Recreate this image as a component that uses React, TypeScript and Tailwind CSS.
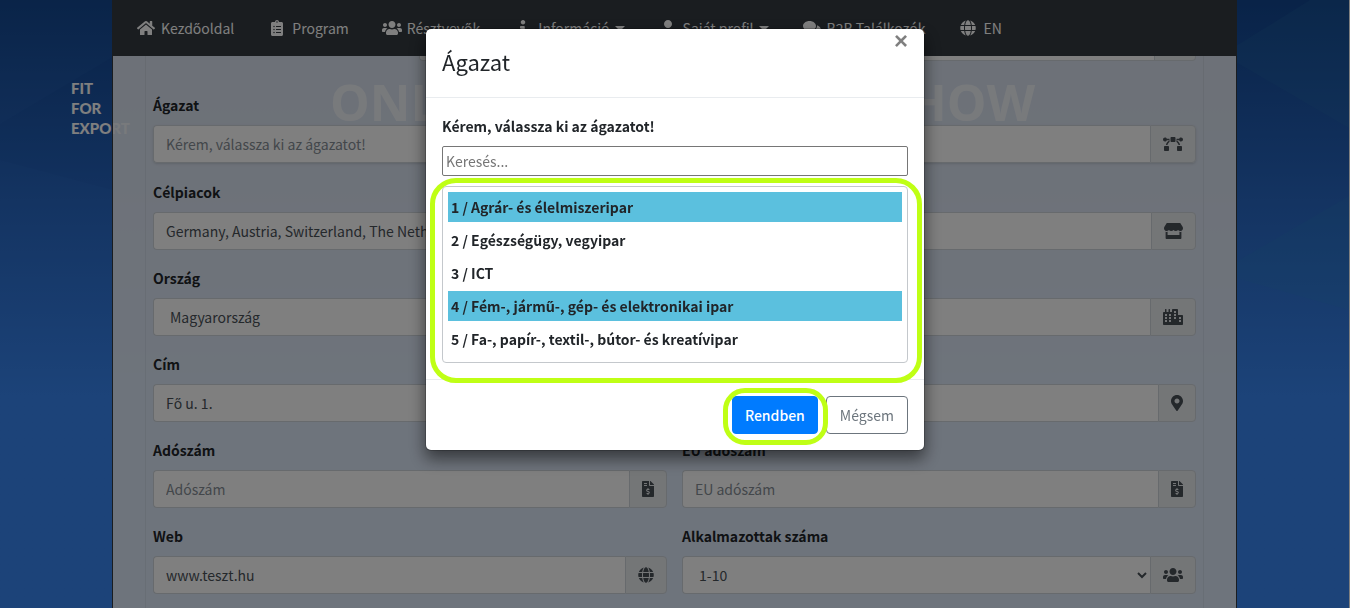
import React, { useState } from 'react';
import {
  FaBezierCurve,
  FaCity,
  FaClipboardList,
  FaComments,
  FaFileInvoiceDollar,
  FaGlobe,
  FaHome,
  FaInfo,
  FaMapMarkerAlt,
  FaStore,
  FaUser,
  FaUsers,
} from 'react-icons/fa';

const navItems = [
  { label: 'Kezdőoldal', icon: FaHome },
  { label: 'Program', icon: FaClipboardList },
  { label: 'Résztvevők', icon: FaUsers },
  { label: 'Információ', icon: FaInfo, dropdown: true },
  { label: 'Saját profil', icon: FaUser, dropdown: true },
  { label: 'B2B Találkozók', icon: FaComments },
  { label: 'EN', icon: FaGlobe },
];

const sectors = [
  '1 / Agrár- és élelmiszeripar',
  '2 / Egészségügy, vegyipar',
  '3 / ICT',
  '4 / Fém-, jármű-, gép- és elektronikai ipar',
  '5 / Fa-, papír-, textil-, bútor- és kreatívipar',
];

const controlClass =
  'h-[38px] min-w-0 flex-1 rounded-l border border-r-0 border-[#ced4da] bg-white px-3 text-[#495057] placeholder:text-[#868e96] outline-none';

function Addon({ children }: { children: React.ReactNode }) {
  return (
    <span className="flex items-center rounded-r border border-[#ced4da] bg-[#e9ecef] px-3 text-[#495057]">
      {children}
    </span>
  );
}

interface FieldProps {
  id: string;
  label: string;
  icon: React.ReactNode;
  raised?: boolean;
  children: React.ReactNode;
}

function Field({ id, label, icon, raised, children }: FieldProps) {
  return (
    <div className={raised ? 'mb-[17px] min-w-0 flex-1' : 'mb-4 min-w-0 flex-1'}>
      <label htmlFor={id} className="mb-2 block font-bold">{label}</label>
      <div className={raised ? 'flex rounded shadow-sm' : 'flex'}>
        {children}
        <Addon>{icon}</Addon>
      </div>
    </div>
  );
}

// Faint triangles behind the page
function Backdrop() {
  return (
    <svg className="absolute inset-0 h-full w-full" viewBox="0 0 1350 608" preserveAspectRatio="none" aria-hidden="true">
      <polygon points="0,0 113,0 113,57 0,124" fill="#ffffff" opacity="0.01" />
      <polygon points="0,124 113,57 113,190 0,160" fill="#001a50" opacity="0.03" />
      <polygon points="1237,46 1311,0 1350,0 1350,128 1237,62" fill="#2c80b0" opacity="0.15" />
      <polygon points="1237,262 1350,196 1350,310 1237,278" fill="#2c90c0" opacity="0.12" />
    </svg>
  );
}

function SectorDialog() {
  const [selected, setSelected] = useState([0, 3]);
  const [query, setQuery] = useState('');

  const toggle = (index: number) => {
    setSelected(selected.includes(index) ? selected.filter((i) => i !== index) : [...selected, index]);
  };

  return (
    <div className="fixed inset-0 z-20 overflow-hidden bg-black/50">
      <div
        role="dialog"
        aria-labelledby="dialog-title"
        className="mx-auto mt-7 max-w-[500px] rounded-md border border-black/20 bg-white bg-clip-padding shadow-[0_8px_16px_rgba(0,0,0,0.5)]"
      >
        <header className="flex items-start justify-between border-b border-[#e9ecef] px-4 pt-4 pb-5">
          <h4 id="dialog-title" className="text-[22px] leading-8">Ágazat</h4>
          <button type="button" aria-label="Bezárás" className="-mt-4 font-['Liberation_Sans',sans-serif] text-2xl leading-6 font-bold text-black/50">×</button>
        </header>

        <div className="p-4">
          <label htmlFor="sector-search" className="mb-2 block font-bold">Kérem, válassza ki az ágazatot!</label>
          <input
            id="sector-search"
            type="text"
            placeholder="Keresés..."
            value={query}
            onChange={(e) => setQuery(e.target.value)}
            className="block h-[30px] w-full rounded-xs border border-[#767676] px-[3px] placeholder:text-[#757575]"
          />
          <div className="relative mt-[10px] rounded border border-[#c4c8cc] p-[5px]">
            {sectors.map((sector, index) => (
              <label
                key={sector}
                className={
                  selected.includes(index)
                    ? 'mb-[3px] block bg-[#5bc0de] px-[3px] leading-[30px] font-bold'
                    : 'mb-[3px] block px-[3px] leading-[30px] font-bold'
                }
              >
                <input
                  type="checkbox"
                  className="sr-only"
                  checked={selected.includes(index)}
                  onChange={() => toggle(index)}
                />
                {sector}
              </label>
            ))}
            <span className="pointer-events-none absolute -top-[9px] -right-[15px] -bottom-[21px] -left-[13px] rounded-[26px] border-[5px] border-[#bfff15]" />
          </div>
        </div>

        <footer className="flex justify-end gap-2 border-t border-[#e9ecef] p-4">
          <div className="relative">
            <button type="button" className="h-[38px] rounded border border-[#007bff] bg-[#007bff] px-3 font-medium text-white">Rendben</button>
            <span className="pointer-events-none absolute -top-2 -right-[10px] -bottom-[11px] -left-[9px] rounded-[22px] border-[5px] border-[#bfff15]" />
          </div>
          <button type="button" className="h-[38px] rounded border border-[#6c757d] px-[13px] text-[#6c757d]">Mégsem</button>
        </footer>
      </div>
    </div>
  );
}

export default function App() {
  return (
    <div className="relative h-screen overflow-hidden border-r border-white bg-linear-to-b from-[#124690] via-[#2868c4] via-33% to-[#3886f2] to-65% font-['Noto_Sans_CJK_JP','Noto_Sans',sans-serif] text-sm leading-6 text-[#212529]">
      <Backdrop />
      <div className="absolute top-[78px] left-[71px] font-['Lato',sans-serif] text-[15px] leading-5 font-black text-white">
        FIT<br />FOR<br />EXPORT
      </div>
      <div className="absolute top-[72px] right-[314px] left-[330px] flex justify-between font-['Open_Sans',sans-serif] text-[50px] leading-[60px] font-bold text-white">
        <span>ONL</span>
        <span>HOW</span>
      </div>

      <div className="relative mx-auto max-w-[1125px] border-x border-[#343a40] bg-[#eff3f8]/90">
        <nav className="flex h-14 items-center gap-[33px] bg-[#343a40] px-[23px] text-white">
          {navItems.map(({ label, icon: Icon, dropdown }) => (
            <a key={label} href="#" className="flex items-center gap-[5px] whitespace-nowrap">
              <Icon className="h-4 w-5" />
              {label}
              {dropdown && <span className="border-x-[5px] border-t-[5px] border-x-transparent border-t-white" />}
            </a>
          ))}
        </nav>

        <div className="px-8">
          <form className="border-x border-black/5 px-[7px]">
            {/* Bottom edge of the field that is scrolled under the nav */}
            <div className="mb-8 ml-[266px] flex h-[5px]">
              <div className="flex-1 rounded-bl border border-t-0 border-r-0 border-[#ced4da] bg-white" />
              <div className="w-[42px] rounded-br border border-t-0 border-[#ced4da] bg-[#e9ecef]" />
            </div>

            <Field id="sector" label="Ágazat" raised icon={<FaBezierCurve className="h-4 w-5" />}>
              <input id="sector" type="text" placeholder="Kérem, válassza ki az ágazatot!" className={controlClass} />
            </Field>
            <Field id="markets" label="Célpiacok" icon={<FaStore className="h-4 w-[19px]" />}>
              <input id="markets" type="text" defaultValue="Germany, Austria, Switzerland, The Netherlands" className={controlClass} />
            </Field>
            <Field id="country" label="Ország" icon={<FaCity className="h-4 w-5" />}>
              <select id="country" className={`${controlClass} appearance-none indent-1`}>
                <option>Magyarország</option>
              </select>
            </Field>
            <Field id="address" label="Cím" icon={<FaMapMarkerAlt className="h-4 w-3" />}>
              <input id="address" type="text" defaultValue="Fő u. 1." className={controlClass} />
            </Field>
            <div className="flex gap-[15px]">
              <Field id="tax" label="Adószám" icon={<FaFileInvoiceDollar className="h-4 w-3" />}>
                <input id="tax" type="text" placeholder="Adószám" className={controlClass} />
              </Field>
              <Field id="eu-tax" label="EU adószám" icon={<FaFileInvoiceDollar className="h-4 w-3" />}>
                <input id="eu-tax" type="text" placeholder="EU adószám" className={controlClass} />
              </Field>
            </div>
            <div className="flex gap-[15px] pb-8">
              <Field id="web" label="Web" icon={<FaGlobe className="h-4 w-4" />}>
                <input id="web" type="text" defaultValue="www.teszt.hu" className={controlClass} />
              </Field>
              <Field id="staff" label="Alkalmazottak száma" icon={<FaUsers className="h-4 w-5" />}>
                <select id="staff" className={controlClass}>
                  <option>1-10</option>
                </select>
              </Field>
            </div>
          </form>
        </div>
      </div>

      <SectorDialog />
    </div>
  );
}
